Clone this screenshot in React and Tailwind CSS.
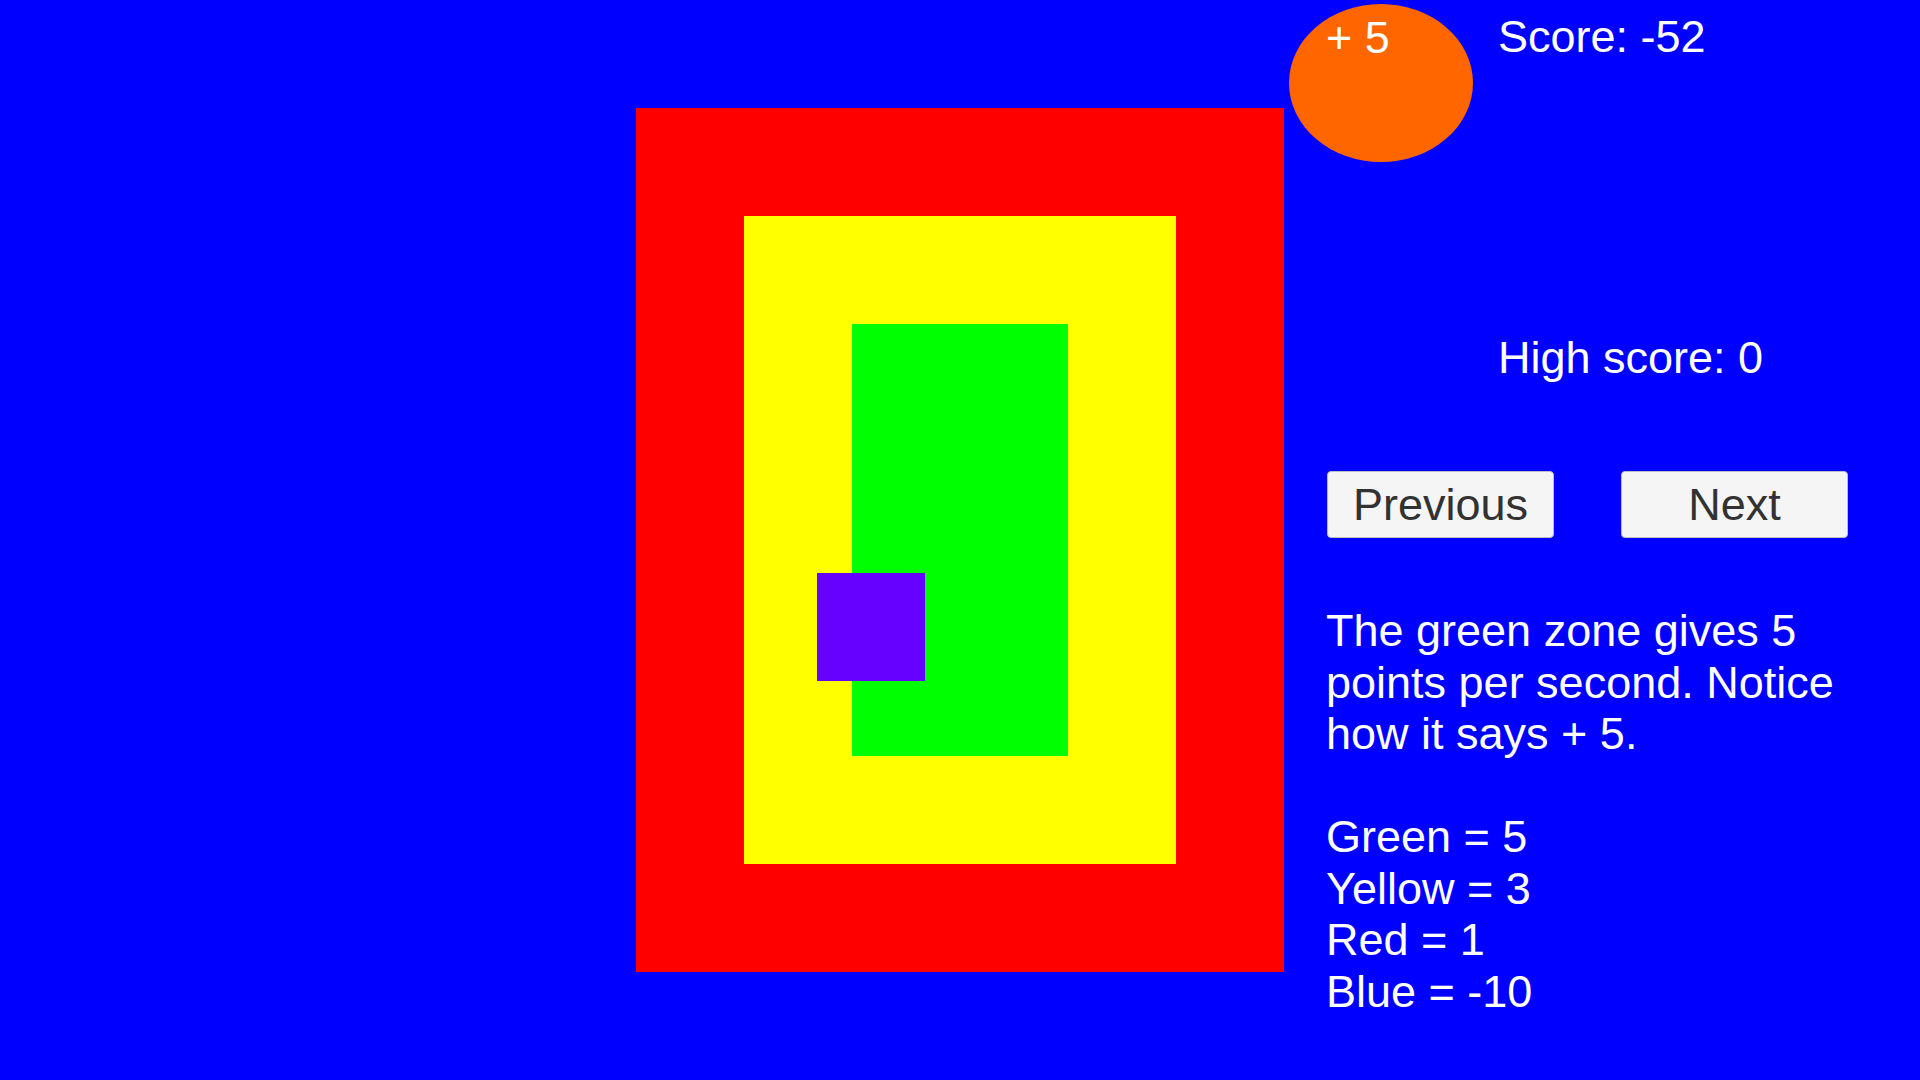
export default function App() {
  return (
    <div className="w-[1920px] h-[1080px] bg-[#0000ff] grid grid-cols-[636px_648px_636px] overflow-hidden text-white text-[45px] leading-[51.5px] font-['Liberation_Sans',Arial,sans-serif]">
      <div />
      <div className="pt-[108px]">
        <div className="relative h-[864px] bg-[#ff0000] p-[108px]">
          <div className="h-full bg-[#ffff00] p-[108px]">
            <div className="h-full bg-[#00ff00]" />
          </div>
          <div className="absolute left-[181px] top-[465px] w-[108px] h-[108px] bg-[#6600ff]" />
        </div>
      </div>
      <div className="relative flex flex-col items-start pl-[42px]">
        <div className="absolute left-[5px] top-[4px] w-[184px] h-[158px] rounded-[50%] bg-[#ff6600] pl-[37px] pt-[8px]">
          <span>+ 5</span>
        </div>
        <div className="ml-[172px] mt-[11px] whitespace-nowrap">Score: -52</div>
        <div className="ml-[172px] mt-[269px] whitespace-nowrap">High score: 0</div>
        <div className="mt-[88px] ml-px flex gap-[67px]">
          <button className="w-[227px] h-[67px] bg-[#f5f5f5] border border-[#bdbdbd] rounded-[4px] text-[#323232] text-[45px] leading-none flex items-center justify-center">
            Previous
          </button>
          <button className="w-[227px] h-[67px] bg-[#f5f5f5] border border-[#bdbdbd] rounded-[4px] text-[#323232] text-[45px] leading-none flex items-center justify-center">
            Next
          </button>
        </div>
        <p className="mt-[67px] w-[540px]">
          The green zone gives 5 points per second. Notice how it says + 5.
        </p>
        <div className="mt-[51.5px] flex flex-col">
          <div>Green = 5</div>
          <div>Yellow = 3</div>
          <div>Red = 1</div>
          <div>Blue = -10</div>
        </div>
      </div>
    </div>
  );
}
